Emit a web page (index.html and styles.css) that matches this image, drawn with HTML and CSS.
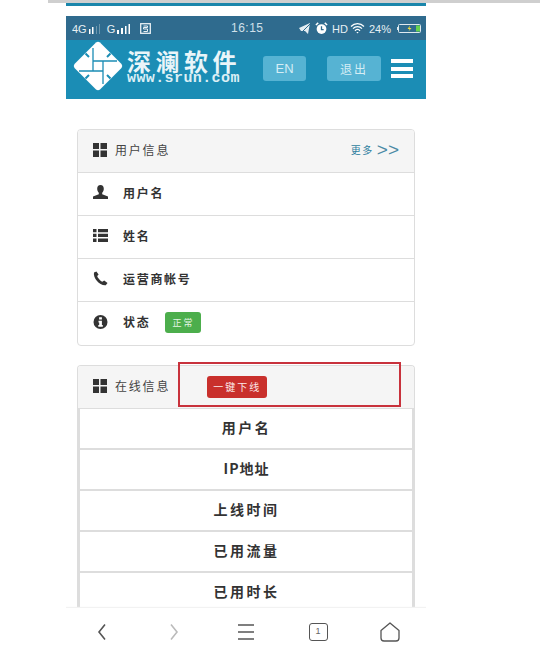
FILE: index.html
```html
<!DOCTYPE html>
<html lang="zh">
<head>
<meta charset="utf-8">
<title>用户信息</title>
<link rel="stylesheet" href="styles.css">
</head>
<body>
<div class="topline"></div>
<div class="phone">
  <div class="tealline"></div>
  <div class="status">
    <div class="st-left">
      <span>4G</span>
      <svg class="sig" width="16" height="10" viewBox="0 0 16 10"><path d="M1 5h1.500v5H1zM4 3h1.500v7H4z" fill="#fff"/><path d="M8 2h1v8H8zM11 0h1v10h-1z" fill="#6d97ae"/></svg>
      <span class="g">G</span>
      <svg class="sig" width="16" height="10" viewBox="0 0 16 10"><path d="M1 6h2v4H1zM5 4h2v6H5zM9 2h1.500v8H9zM12.500 0H14v10h-1.500z" fill="#fff"/></svg>
      <svg class="sim" width="11" height="11" viewBox="0 0 11 11"><rect x=".7" y=".7" width="9.600" height="9.600" fill="none" stroke="#e8f0f4" stroke-width="1.300"/><path d="M3.500 3h4v1.500h-4v1.500h4v2.500h-4" fill="none" stroke="#e8f0f4"/></svg>
    </div>
    <div class="st-time">16:15</div>
    <div class="st-right">
      <svg width="14" height="13" viewBox="0 0 14 13"><path d="M1 6l11-5-2 11-3-3-4 0z" fill="#e4edf2"/><path d="M2 12L13 1" stroke="#2f6b8e"/></svg>
      <svg class="clock" width="13" height="13" viewBox="0 0 12 12"><circle cx="6" cy="6.500" r="4.500" fill="#fff"/><path d="M6 4v3h2" fill="none" stroke="#2f6b8e" stroke-width="1.200"/><path d="M.8 2.800L3 .8M11.200 2.800L9 .8" stroke="#fff" stroke-width="1.300"/></svg>
      <span class="hd">HD</span>
      <svg width="15" height="11" viewBox="0 0 15 11"><path d="M1 3.500a9 9 0 0 1 13 0M3 5.700a6 6 0 0 1 9 0M5 7.800a3 3 0 0 1 5 0" fill="none" stroke="#fff" stroke-width="1.200"/><path d="M6.300 9l1.200 1.600L8.700 9z" fill="#fff"/></svg>
      <span class="pct">24%</span>
      <svg class="batt" width="25" height="9" viewBox="0 0 25 9"><rect x="1.500" y=".5" width="22" height="8" rx="1" fill="none" stroke="#dfe9ef"/><path d="M0 3h1v3H0z" fill="#dfe9ef"/><rect x="19" y="1.500" width="4" height="6" fill="#64d24e"/><path d="M13 1.500l-2.500 3.500h2l-1 2.500 3-3.500h-2z" fill="#f1dc3a"/></svg>
    </div>
  </div>
  <header class="header">
    <svg class="logo" width="50" height="50" viewBox="0 0 50 50">
      <path d="M23 1.500Q25 0 27 1.500L48.500 23Q50 25 48.500 27L27 48.500Q25 50 23 48.500L1.500 27Q0 25 1.500 23Z" fill="#fff"/>
      <path d="M20 7V30M30 20V43M20 20H44M6 30H30" fill="none" stroke="#1b8db5" stroke-width="1.300"/>
      <path d="M12.500 12.500L16 16M37.500 12.500L34 16M12.500 37.500L16 34M37.500 37.500L34 34" fill="none" stroke="#1b8db5" stroke-width="2"/>
    </svg>
    <div class="brand">
      <div class="brand-cn">深澜软件</div>
      <div class="brand-en">www.srun.com</div>
    </div>
    <a class="hbtn en">EN</a>
    <a class="hbtn out">退出</a>
    <div class="burger"><i></i><i></i><i></i></div>
  </header>

  <section class="panel first">
    <div class="phead">
      <svg class="ico" width="14" height="14" viewBox="0 0 14 14"><path d="M0 0h6v6H0zM7.500 0H14v6H7.500zM0 7.500h6V14H0zM7.500 7.500H14V14H7.500z" fill="#333"/></svg>
      <span class="ptitle">用户信息</span>
      <a class="more">更多<b>&gt;&gt;</b></a>
    </div>
    <div class="row">
      <svg class="ico" width="15" height="15" viewBox="0 0 15 15"><path d="M7.500 0C5.300 0 4.200 1.600 4.200 3.800c0 1.700.7 3.200 1.600 4v1.400L0 11.500V14h15v-2.500L9.200 9.200V7.800c.9-.8 1.600-2.300 1.600-4C10.800 1.600 9.700 0 7.500 0z" fill="#333"/></svg>
      <span class="label">用户名</span>
    </div>
    <div class="row">
      <svg class="ico" width="15" height="13" viewBox="0 0 15 13"><path d="M0 0h3.500v3.300H0zM5 0h10v3.300H5zM0 4.800h3.500v3.300H0zM5 4.800h10v3.300H5zM0 9.600h3.500V13H0zM5 9.600h10V13H5z" fill="#333"/></svg>
      <span class="label">姓名</span>
    </div>
    <div class="row">
      <svg class="ico" width="15" height="15" viewBox="0 0 15 15"><path d="M3.400.4L1 1.500C.4 4 1.700 7.300 4 10s5.300 4.600 8.800 4.300L14.500 12l-3.300-2.500-1.900 1.300C8 10.200 6.600 9 5.600 7.600 4.800 6.600 4.300 5.800 4.200 5l1.400-1.500z" fill="#333"/></svg>
      <span class="label">运营商帐号</span>
    </div>
    <div class="row">
      <svg class="ico" width="14" height="14" viewBox="0 0 14 14"><circle cx="7" cy="7" r="7" fill="#333"/><path d="M5.600 2.300h2.800v2.200H5.600zM5 5.800h3.400v4.200h.9v1.700H4.800V10h.9V7.500H5z" fill="#fff"/></svg>
      <span class="label">状态</span>
      <span class="tag ok">正常</span>
    </div>
  </section>

  <section class="panel second">
    <div class="phead">
      <svg class="ico" width="14" height="14" viewBox="0 0 14 14"><path d="M0 0h6v6H0zM7.500 0H14v6H7.500zM0 7.500h6V14H0zM7.500 7.500H14V14H7.500z" fill="#333"/></svg>
      <span class="ptitle">在线信息</span>
      <a class="tag danger">一键下线</a>
      <div class="mark"></div>
    </div>
    <div class="table">
      <div class="cell">用户名</div>
      <div class="cell tight">IP地址</div>
      <div class="cell">上线时间</div>
      <div class="cell">已用流量</div>
      <div class="cell">已用时长</div>
    </div>
  </section>

  <nav class="nav">
    <svg width="12" height="18" viewBox="0 0 12 18"><path d="M9 1.500L3 9l6 7.500" fill="none" stroke="#555" stroke-width="1.600"/></svg>
    <svg width="12" height="18" viewBox="0 0 12 18"><path d="M3 1.500L9 9l-6 7.500" fill="none" stroke="#bbb" stroke-width="1.600"/></svg>
    <svg width="18" height="18" viewBox="0 0 18 18"><path d="M1 2h16M1 9h16M1 16h16" fill="none" stroke="#555" stroke-width="1.500"/></svg>
    <div class="tabs">1</div>
    <svg width="20" height="20" viewBox="0 0 20 20"><path d="M10 1L1 8.500V16a3 3 0 0 0 3 3h12a3 3 0 0 0 3-3V8.500z" fill="none" stroke="#555" stroke-width="1.300" stroke-linejoin="round"/></svg>
  </nav>
</div>
</body>
</html>
```
FILE: styles.css
```css
* { box-sizing: border-box; }
html, body { margin: 0; padding: 0; height: 667px; overflow: hidden; background: #fff; }
body { font-family: "Noto Sans CJK SC", "Liberation Sans", sans-serif; color: #333; position: relative; }
.topline { height: 3px; margin-left: 48px; background: #cfcfcf; }
.phone { width: 360px; height: 664px; margin-left: 66px; position: relative; overflow: hidden; }
.tealline { height: 3px; background: #1a86ab; margin-bottom: 10px; }
.status { height: 24px; background: #2f6b8e; display: flex; align-items: center; justify-content: space-between; padding: 1px 4px 0 6px; color: #e8f0f4; font: 11px "Liberation Sans", sans-serif; position: relative; }
.st-left, .st-right { display: flex; align-items: center; }
.st-left .g { margin-left: 3px; }
.sig { margin-left: 1px; }
.sim { margin-left: 8px; }
.st-time { position: absolute; left: 165px; top: 5px; font-size: 12px; letter-spacing: .5px; color: #cfe0ea; }
.st-right { gap: 2px; }
.clock { margin-left: 1px; }
.hd { margin-left: 2px; }
.pct { margin-left: 2px; }
.batt { margin-left: 4px; }
.header { height: 59px; background: #1b8db5; display: flex; align-items: center; padding: 0 0 1px 7px; }
.logo { flex: none; margin-top: -7px; }
.brand { margin-left: 4px; width: 114px; color: #fff; margin-top: -5px; }
.brand-cn { font-size: 24px; line-height: 24px; font-weight: 700; white-space: nowrap; letter-spacing: 4.500px; color: #e9f5f9; }
.brand-en { font: bold 15px/12px "Liberation Mono", monospace; color: #dceff5; letter-spacing: .4px; white-space: nowrap; }
.hbtn { height: 25px; border-radius: 3px; background: #56b3d3; color: #d5edf5; display: flex; align-items: center; justify-content: center; font-size: 13px; margin-top: -2px; }
.en { width: 43px; margin-left: 22px; font-family: "Liberation Sans", sans-serif; }
.out { width: 54px; margin-left: 21px; letter-spacing: 2px; font-size: 12px; }
.burger { width: 22px; margin-left: 10px; display: flex; flex-direction: column; gap: 3.500px; margin-top: -1px; }
.burger i { height: 4px; background: #fff; display: block; }
.panel { margin: 0 11px; border: 1px solid #ddd; border-radius: 4px; background: #fff; }
.first { margin-top: 30px; height: 217px; }
.second { margin-top: 19px; border-bottom: 0; }
.phead { height: 43px; background: #f5f5f5; border-bottom: 1px solid #ddd; border-radius: 3px 3px 0 0; display: flex; align-items: center; padding: 0 15px 3px; position: relative; }
.ptitle { margin-left: 8px; font-size: 12px; letter-spacing: 1.800px; color: #444; }
.more { margin-left: auto; color: #2f7f9f; font-size: 10px; letter-spacing: 1.500px; display: flex; align-items: center; }
.more b { font: 19px "Liberation Sans", sans-serif; letter-spacing: 0; color: #4b8aa5; margin-left: 3px; font-weight: 400; }
.row { height: 43px; display: flex; align-items: center; padding: 0 15px 3px; border-bottom: 1px solid #ddd; }
.row:last-child { border-bottom: 0; }
.row .ico { flex: none; width: 15px; margin-top: -1px; }
.label { margin-left: 15px; font-size: 12px; font-weight: 700; letter-spacing: 1.700px; color: #333; margin-top: -1px; }
.tag { border-radius: 3px; color: #fff; display: flex; align-items: center; justify-content: center; letter-spacing: 2px; }
.ok { width: 36px; height: 21px; background: #4cae4c; font-size: 9px; margin-left: 15px; color: #e4f5e4; }
.danger { width: 60px; height: 22px; background: #c9302c; font-size: 10px; margin-left: 37px; color: #fbeaea; margin-top: 2px; }
.mark { position: absolute; left: 100px; top: -4px; width: 223px; height: 45px; border: 2px solid #c8323c; }
.table { border: 2px solid #ddd; border-top: 0; }
.cell { height: 41px; border-bottom: 2px solid #ddd; display: flex; align-items: center; justify-content: center; font-size: 14px; font-weight: 700; letter-spacing: 2.500px; color: #333; padding: 0 0 4px 1px; }
.tight { letter-spacing: 1px; }
.nav { position: absolute; left: 0; right: 0; top: 605px; height: 59px; background: #fff; box-shadow: 0 -1px 1px #f2f2f2; display: grid; grid-template-columns: repeat(5, 1fr); place-items: center; padding-bottom: 11px; }
.tabs { width: 19px; height: 18px; border: 1.500px solid #555; border-radius: 3px; font: 9px/15px "Liberation Sans", sans-serif; text-align: center; color: #666; }
```
